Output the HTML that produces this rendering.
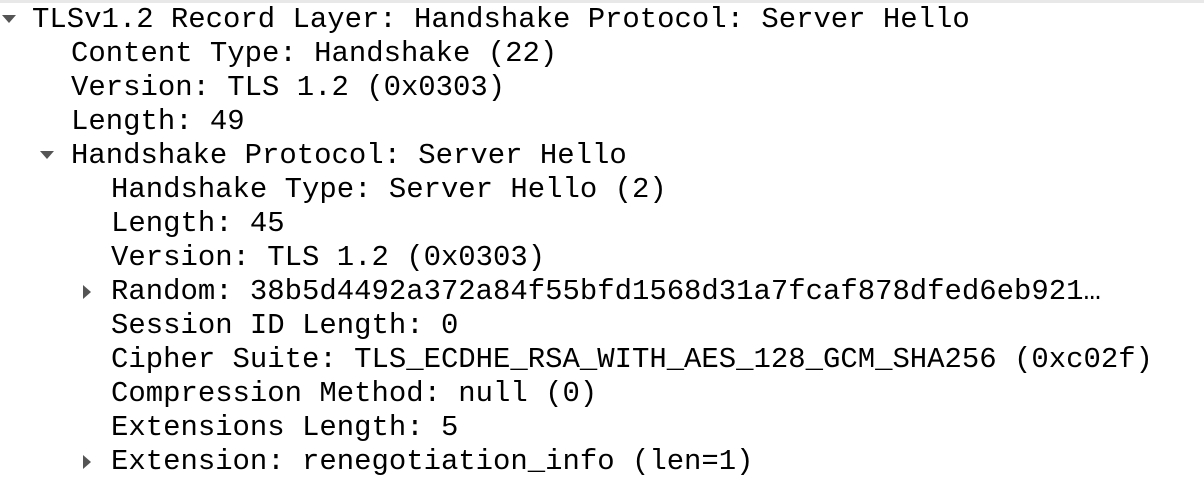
<!DOCTYPE html><html><head><style>
body{margin:0;width:1204px;height:482px;background:#fff;overflow:hidden;position:relative;font-family:"Liberation Mono",monospace;font-size:28.95px;color:#000}
.top{position:absolute;left:0;top:0;width:1204px;height:3px;background:#e8e8e8}
.l{position:absolute;white-space:pre;line-height:34px;height:34px}
.dn{position:absolute;width:0;height:0;border-left:7px solid transparent;border-right:7px solid transparent;border-top:8px solid #555}
.rt{position:absolute;width:0;height:0;border-top:7px solid transparent;border-bottom:7px solid transparent;border-left:8px solid #555}
</style></head><body><div class="top"></div>
<div class="dn" style="left:2px;top:15px"></div>
<div class="l" style="left:32px;top:3px">TLSv1.2 Record Layer: Handshake Protocol: Server Hello</div>
<div class="l" style="left:71px;top:37px">Content Type: Handshake (22)</div>
<div class="l" style="left:71px;top:71px">Version: TLS 1.2 (0x0303)</div>
<div class="l" style="left:71px;top:105px">Length: 49</div>
<div class="dn" style="left:40px;top:151px"></div>
<div class="l" style="left:71px;top:139px">Handshake Protocol: Server Hello</div>
<div class="l" style="left:111px;top:173px">Handshake Type: Server Hello (2)</div>
<div class="l" style="left:111px;top:207px">Length: 45</div>
<div class="l" style="left:111px;top:241px">Version: TLS 1.2 (0x0303)</div>
<div class="rt" style="left:83px;top:285px"></div>
<div class="l" style="left:111px;top:275px">Random: 38b5d4492a372a84f55bfd1568d31a7fcaf878dfed6eb921…</div>
<div class="l" style="left:111px;top:309px">Session ID Length: 0</div>
<div class="l" style="left:111px;top:343px">Cipher Suite: TLS_ECDHE_RSA_WITH_AES_128_GCM_SHA256 (0xc02f)</div>
<div class="l" style="left:111px;top:377px">Compression Method: null (0)</div>
<div class="l" style="left:111px;top:411px">Extensions Length: 5</div>
<div class="rt" style="left:83px;top:455px"></div>
<div class="l" style="left:111px;top:445px">Extension: renegotiation_info (len=1)</div>
</body></html>
